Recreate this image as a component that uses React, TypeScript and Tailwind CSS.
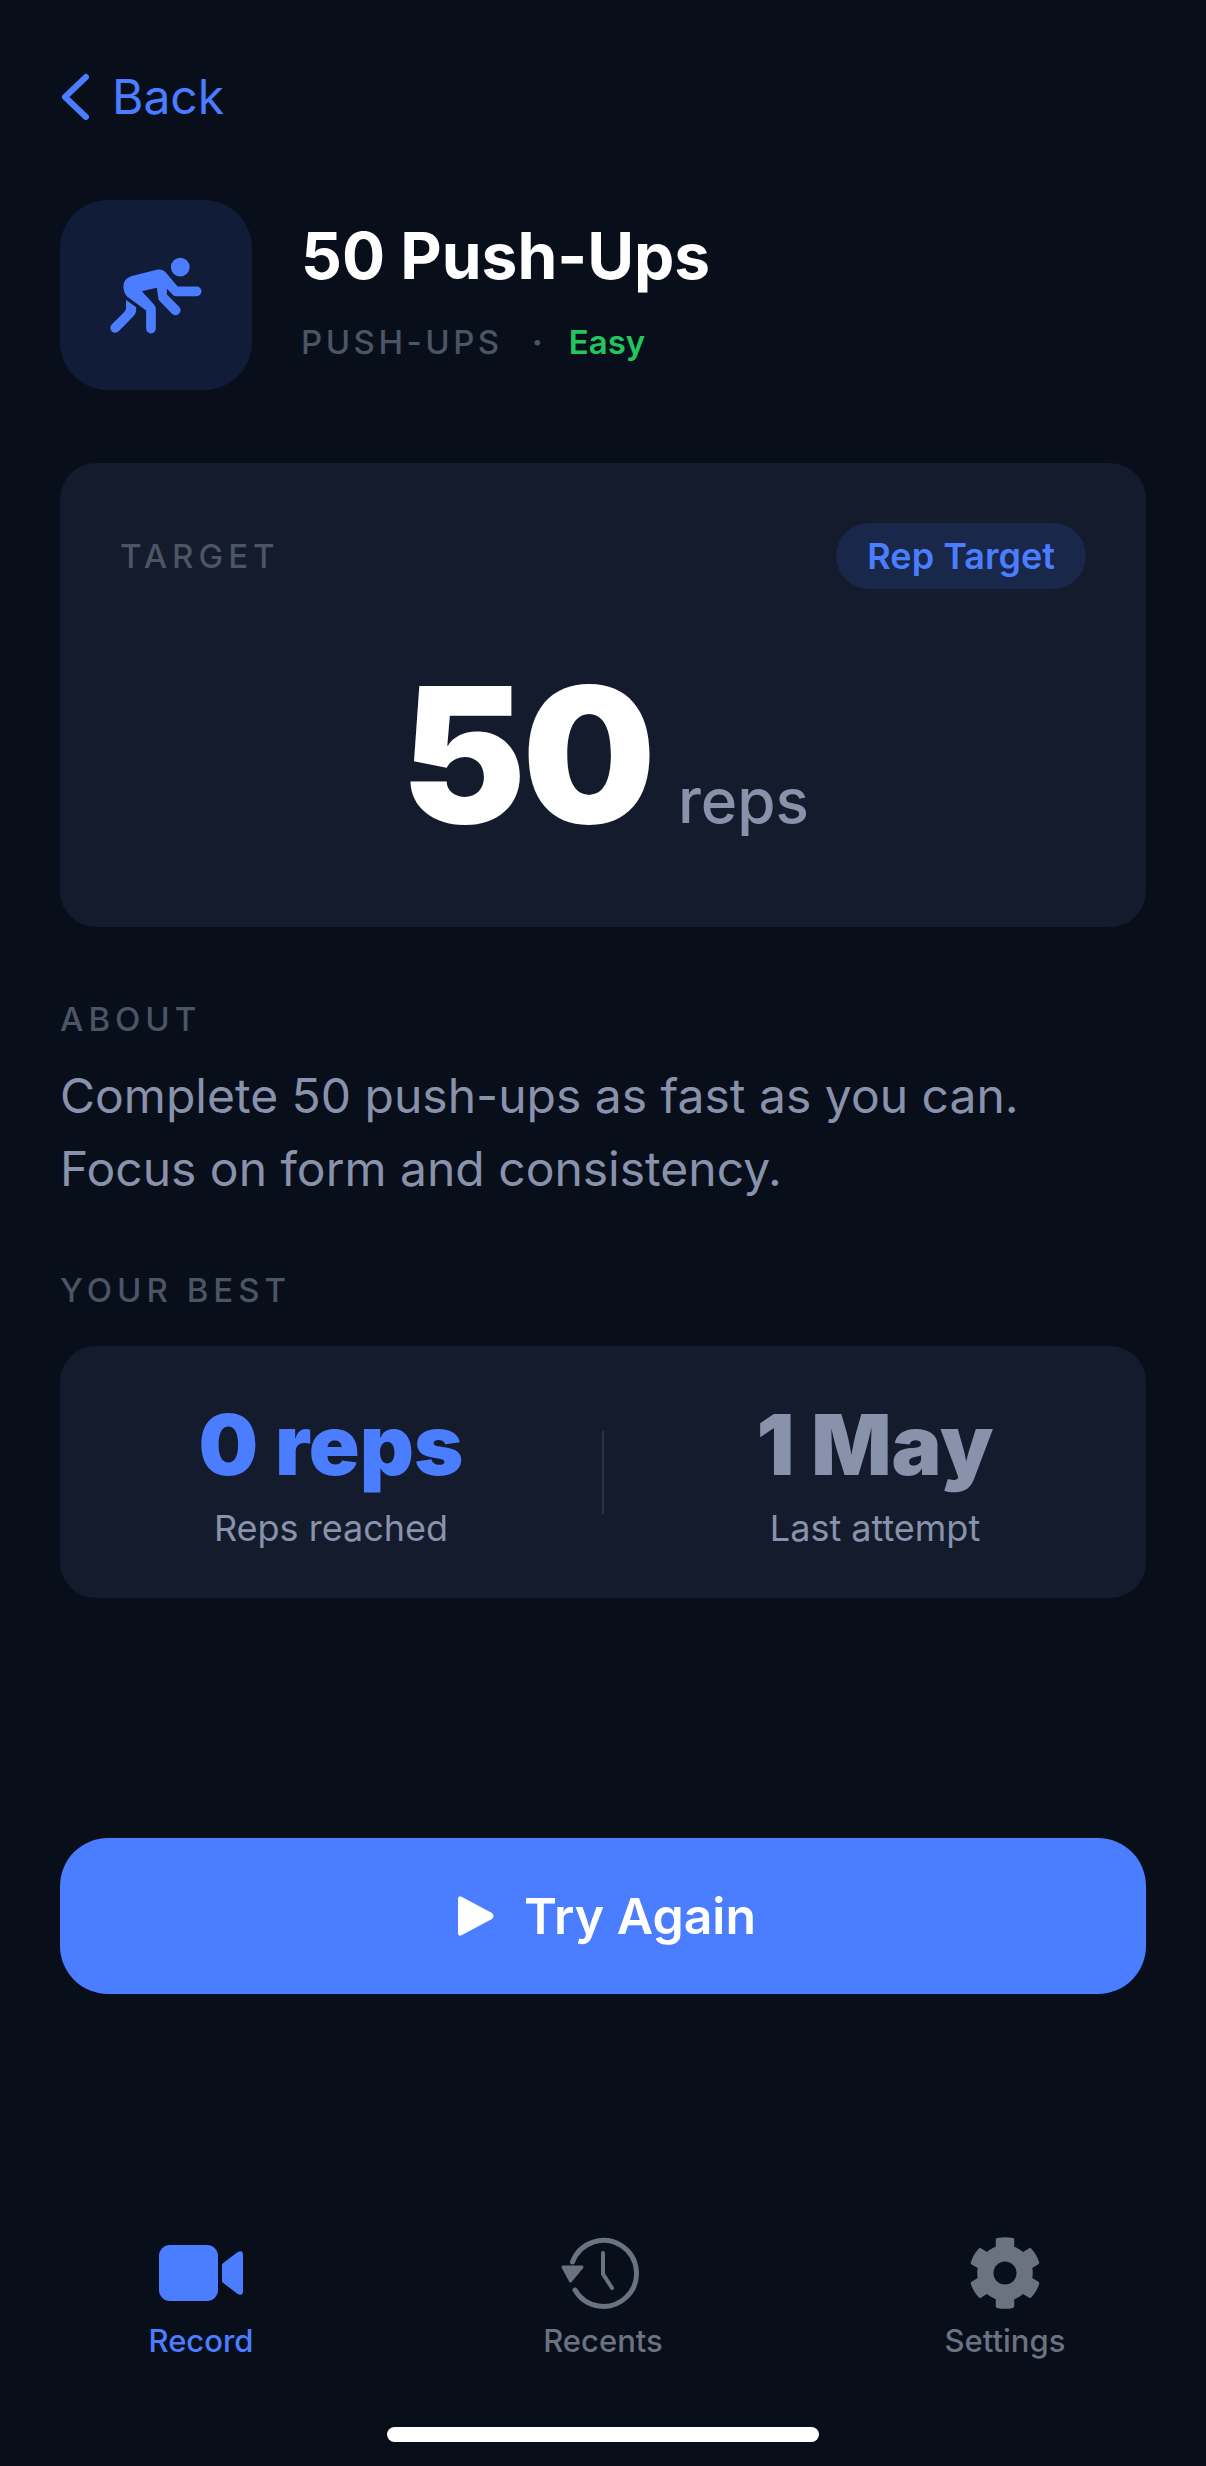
import { FaCog } from "react-icons/fa";

function RunnerIcon() {
  return (
    <svg width="92" height="77" viewBox="150 170 275 230" fill="#4a7dff">
      <circle cx="360" cy="200" r="28" />
      <path d="M290 208 L215 227 Q190 235 190 258 Q190 275 200 287 L258 330 L258 384 A14.5 14.5 0 0 0 287 384 L287 325 Q287 318 281 311 L245 272 L290 262 L295 298 L336 340 A15 15 0 0 0 358 320 L320 282 L320 265 L340 285 Q343 287 347 287 L409 287 A14.5 14.5 0 0 0 409 258 L352 258 L320 220 Q308 205 290 208 Z" />
      <path d="M198 298 L228 320 L228 332 Q226 341 220 347 L176 392 A14.5 14.5 0 0 1 155 372 L192 335 Q198 329 198 322 Z" />
    </svg>
  );
}

function VideoIcon() {
  return (
    <svg width="84" height="56" viewBox="0 0 84 56" fill="#4a7dff">
      <rect x="0" y="0" width="59" height="56" rx="11" />
      <path d="M63 19 L78 7.5 Q84 4 84 10 L84 46 Q84 52 78 48.5 L63 37 Z" />
    </svg>
  );
}

function HistoryIcon() {
  return (
    <svg className="-ml-[6px]" width="80" height="74" viewBox="0 0 80 74" fill="none" stroke="#6b7280" strokeWidth="5" strokeLinecap="round" strokeLinejoin="round">
      <path d="M12.5 26 A33 33 0 1 1 15 54" />
      <path d="M3 31 L22 31 L10.5 45 Z" fill="#6b7280" strokeWidth="3" />
      <path d="M43 17 L43 38 L52 52" strokeWidth="4" />
    </svg>
  );
}

function Stat({ value, label, valueClass }: { value: string; label: string; valueClass: string }) {
  return (
    <div className="flex flex-1 flex-col items-center pt-[3px]">
      <div className={`text-[84px] leading-[94px] font-black ${valueClass}`}>{value}</div>
      <div className="mt-[14px] text-[36px] leading-[44px] text-[#8892ab]">{label}</div>
    </div>
  );
}

function SectionLabel({ children }: { children: string }) {
  return <div className="text-[33px] leading-[40px] font-medium tracking-[5px] text-[#4b5563]">{children}</div>;
}

export default function App() {
  return (
    <div className="flex h-[2466px] w-[1206px] flex-col overflow-hidden bg-[#090e1b] font-['Inter',sans-serif]">
      <main className="flex flex-col px-[60px] pt-[66px]">
        {/* Back link */}
        <div className="flex h-[62px] items-center gap-[22px] text-[#4a7dff]">
          <svg width="30" height="48" viewBox="0 0 30 48" fill="none" stroke="#4a7dff" strokeWidth="6" strokeLinecap="round" strokeLinejoin="round">
            <path d="M26 4 L5 24 L26 44" />
          </svg>
          <span className="text-[48px] leading-[62px]">Back</span>
        </div>

        {/* Header */}
        <div className="mt-[72px] flex items-center gap-[50px]">
          <div className="flex h-[190px] w-[192px] items-center justify-center rounded-[48px] bg-[#111c38]">
            <RunnerIcon />
          </div>
          <div className="-ml-[1px] flex flex-col">
            <h1 className="-mt-[10px] text-[64px] leading-[76px] font-bold text-white">50 Push-Ups</h1>
            <div className="mt-[28px] flex items-center text-[33px] leading-[40px]">
              <span className="font-medium tracking-[3.5px] text-[#4b5563]">PUSH-UPS</span>
              <span className="ml-[29px] font-bold text-[#4b5563]">·</span>
              <span className="ml-[26px] font-semibold text-[#22c55e]">Easy</span>
            </div>
          </div>
        </div>

        {/* Target card */}
        <section className="mt-[73px] h-[464px] rounded-[36px] bg-[#141b2d] px-[60px] pt-[60px]">
          <div className="flex items-center justify-between">
            <SectionLabel>TARGET</SectionLabel>
            <span className="flex h-[66px] items-center rounded-full bg-[#18274a] px-[31px] text-[36px] font-semibold text-[#4a7dff]">Rep Target</span>
          </div>
          <div className="mt-[70px] flex items-baseline justify-center gap-[26px] pl-[4px]">
            <span className="text-[188px] leading-[192px] font-black tracking-[-4px] text-white">50</span>
            <span className="text-[62px] leading-[68px] font-medium text-[#8892ab]">reps</span>
          </div>
        </section>

        {/* About */}
        <div className="mt-[72px]">
          <SectionLabel>ABOUT</SectionLabel>
          <p className="mt-[20px] text-[48px] leading-[73px] text-[#8892ab]">
            Complete 50 push-ups as fast as you can.
            <br />
            Focus on form and consistency.
          </p>
        </div>

        {/* Best */}
        <div className="mt-[65px]">
          <SectionLabel>YOUR BEST</SectionLabel>
          <div className="mt-[36px] flex h-[252px] items-center rounded-[36px] bg-[#141b2d]">
            <Stat value="0 reps" label="Reps reached" valueClass="text-[#4a7dff]" />
            <div className="h-[83px] w-[2px] bg-[#2a3245]" />
            <Stat value="1 May" label="Last attempt" valueClass="text-[#8892ab]" />
          </div>
        </div>

        <button className="mt-[240px] flex h-[156px] items-center justify-center gap-[30px] rounded-[48px] bg-[#4a7dff] pl-[8px] text-[50px] font-semibold text-white">
          <svg width="36" height="40" viewBox="0 0 36 40" fill="#fff">
            <path d="M0 3 Q0 -1 4 1 L34 17 Q37 20 34 23 L4 39 Q0 41 0 37 Z" />
          </svg>
          Try Again
        </button>
      </main>

      {/* Tab bar */}
      <nav className="mt-auto flex flex-col items-center pb-[24px]">
        <div className="grid w-full grid-cols-3">
          <div className="flex flex-col items-center text-[#4a7dff]">
            <div className="flex h-[72px] items-center">
              <VideoIcon />
            </div>
            <span className="mt-[8px] text-[31px] leading-[48px] font-medium">Record</span>
          </div>
          <div className="flex flex-col items-center text-[#6b7280]">
            <div className="flex h-[72px] items-center">
              <HistoryIcon />
            </div>
            <span className="mt-[8px] text-[31px] leading-[48px] font-medium">Recents</span>
          </div>
          <div className="flex flex-col items-center text-[#6b7280]">
            <div className="flex h-[72px] items-center">
              <FaCog size={74} color="#6b7280" />
            </div>
            <span className="mt-[8px] text-[31px] leading-[48px] font-medium">Settings</span>
          </div>
        </div>
        <div className="mt-[62px] h-[15px] w-[432px] rounded-full bg-white" />
      </nav>
    </div>
  );
}
